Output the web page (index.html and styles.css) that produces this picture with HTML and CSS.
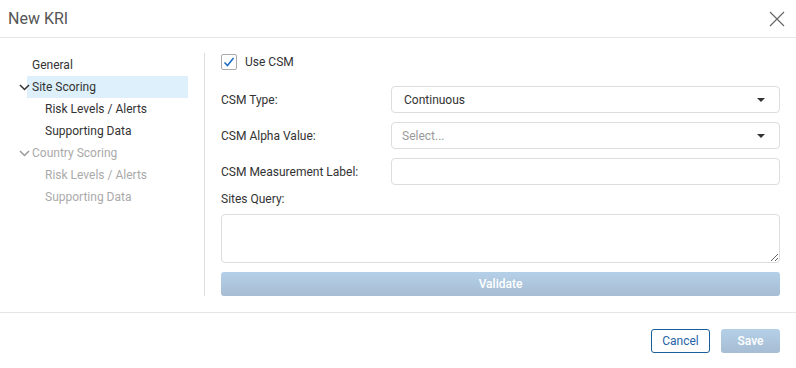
FILE: index.html
```html
<!DOCTYPE html>
<html lang="en">
<head>
    <meta charset="UTF-8">
    <title>New KRI</title>
    <link rel="stylesheet" href="styles.css">
</head>
<body>
    <div class="dialog">
        <!-- Header -->
        <div class="dialog-header">
            <h1 class="dialog-title">New KRI</h1>
            <button class="close-btn" aria-label="Close">
                <svg width="16" height="16" viewBox="0 0 16 16">
                    <path d="M1 1 L15 15 M15 1 L1 15" stroke="#666" stroke-width="1.2" fill="none"/>
                </svg>
            </button>
        </div>

        <div class="dialog-body">
            <!-- Left nav -->
            <div class="side-nav">
                <ul class="nav-list">
                    <li class="nav-item">General</li>
                    <li class="nav-item nav-group active">
                        <svg class="chevron" width="11" height="7" viewBox="0 0 11 7">
                            <polyline points="1,1 5.5,5.5 10,1" stroke="#333" stroke-width="1.5" fill="none"/>
                        </svg>
                        Site Scoring
                    </li>
                    <li class="nav-item nav-sub">Risk Levels / Alerts</li>
                    <li class="nav-item nav-sub">Supporting Data</li>
                    <li class="nav-item nav-group disabled">
                        <svg class="chevron" width="11" height="7" viewBox="0 0 11 7">
                            <polyline points="1,1 5.5,5.5 10,1" stroke="#999" stroke-width="1.5" fill="none"/>
                        </svg>
                        Country Scoring
                    </li>
                    <li class="nav-item nav-sub disabled">Risk Levels / Alerts</li>
                    <li class="nav-item nav-sub disabled">Supporting Data</li>
                </ul>
            </div>

            <!-- Form -->
            <div class="form">
                <label class="check-row">
                    <span class="checkbox">
                        <svg width="12" height="12" viewBox="0 0 12 12">
                            <polyline points="1.5,6.5 4.5,9.5 10.5,2" stroke="#1f6fc5" stroke-width="1.6" fill="none"/>
                        </svg>
                    </span>
                    Use CSM
                </label>

                <div class="field-row">
                    <span class="field-label">CSM Type:</span>
                    <div class="select">
                        <span>Continuous</span>
                        <span class="caret"></span>
                    </div>
                </div>
                <div class="field-row">
                    <span class="field-label">CSM Alpha Value:</span>
                    <div class="select placeholder">
                        <span>Select...</span>
                        <span class="caret"></span>
                    </div>
                </div>
                <div class="field-row">
                    <span class="field-label">CSM Measurement Label:</span>
                    <input class="text-input" type="text">
                </div>

                <div class="query-label">Sites Query:</div>
                <textarea class="query-box"></textarea>
                <button class="btn-primary btn-validate">Validate</button>
            </div>
        </div>

        <!-- Footer -->
        <div class="dialog-footer">
            <button class="btn-outline">Cancel</button>
            <button class="btn-primary btn-save">Save</button>
        </div>
    </div>
</body>
</html>
```

FILE: styles.css
```css
/* Basic reset */
* {
    margin: 0;
    padding: 0;
    box-sizing: border-box;
}

body, html {
    font-family: Roboto, "Liberation Sans", Arial, sans-serif;
    font-size: 12px;
    color: #333;
    background: #fff;
}

.dialog {
    width: 796px;
    height: 368px;
    display: flex;
    flex-direction: column;
}

/* Header */
.dialog-header {
    height: 38px;
    border-bottom: 1px solid #e6e6e6;
    display: flex;
    align-items: center;
    justify-content: space-between;
    padding: 0 11px 0 8px;
}

.dialog-title {
    font-size: 16px;
    font-weight: 400;
    color: #555;
}

.close-btn {
    border: none;
    background: none;
    width: 16px;
    height: 16px;
    display: flex;
    margin-top: 1px;
}

/* Body */
.dialog-body {
    height: 274px;
    display: flex;
    padding-top: 15px;
}

.side-nav {
    width: 205px;
    height: 243px;
    border-right: 1px solid #ddd;
}

.nav-list {
    list-style: none;
    margin-left: 27px;
    margin-top: 1px;
    width: 161px;
}

.nav-item {
    height: 22px;
    line-height: 22px;
    padding-left: 5px;
    display: flex;
    align-items: center;
}

.nav-group {
    padding-left: 0;
}

.nav-group .chevron {
    margin-left: -8px;
    margin-right: 2px;
}

.nav-sub {
    padding-left: 18px;
}

.nav-item.active {
    background-color: #ddf0fb;
}

.nav-item.disabled {
    color: #aaa;
}

/* Form */
.form {
    flex: 1;
    padding: 0 16px 0 16px;
    display: flex;
    flex-direction: column;
}

.check-row {
    display: flex;
    align-items: center;
    height: 16px;
    margin-top: 1px;
    margin-bottom: 16px;
    gap: 8px;
}

.checkbox {
    width: 16px;
    height: 16px;
    border: 1px solid #aaa;
    border-radius: 2px;
    display: flex;
    align-items: center;
    justify-content: center;
}

.field-row {
    display: grid;
    grid-template-columns: 170px 1fr;
    align-items: center;
    margin-bottom: 9px;
}

.select, .text-input {
    height: 27px;
    border: 1px solid #ddd;
    border-radius: 4px;
    background: #fff;
}

.select {
    display: flex;
    align-items: center;
    justify-content: space-between;
    padding: 0 14px 0 12px;
    color: #333;
}

.select.placeholder {
    color: #999;
    padding-left: 10px;
}

.caret {
    width: 0;
    height: 0;
    border-left: 4px solid transparent;
    border-right: 4px solid transparent;
    border-top: 4px solid #333;
}

.text-input {
    font: inherit;
    padding: 0 10px;
    outline: none;
}

.query-label {
    margin-top: -3px;
    line-height: 17px;
    margin-bottom: 6px;
}

.query-box {
    height: 49px;
    border: 1px solid #ddd;
    border-radius: 4px;
    font: inherit;
    padding: 6px 10px;
    outline: none;
}

.btn-primary {
    border: none;
    border-radius: 3px;
    color: #fff;
    font-family: inherit;
    font-size: 12px;
    font-weight: 500;
    background: linear-gradient(#b4d0e8, #a6bdd3);
}

.btn-validate {
    margin-top: 9px;
    height: 24px;
}

/* Footer */
.dialog-footer {
    border-top: 1px solid #e6e6e6;
    display: flex;
    justify-content: flex-end;
    gap: 11px;
    padding: 16px 16px 0 0;
}

.btn-outline, .btn-save {
    width: 59px;
    height: 24px;
}

.btn-outline {
    background: #fff;
    border: 1px solid #1b5e9c;
    border-radius: 3px;
    color: #2563a8;
    font-family: inherit;
    font-size: 12px;
}
```
